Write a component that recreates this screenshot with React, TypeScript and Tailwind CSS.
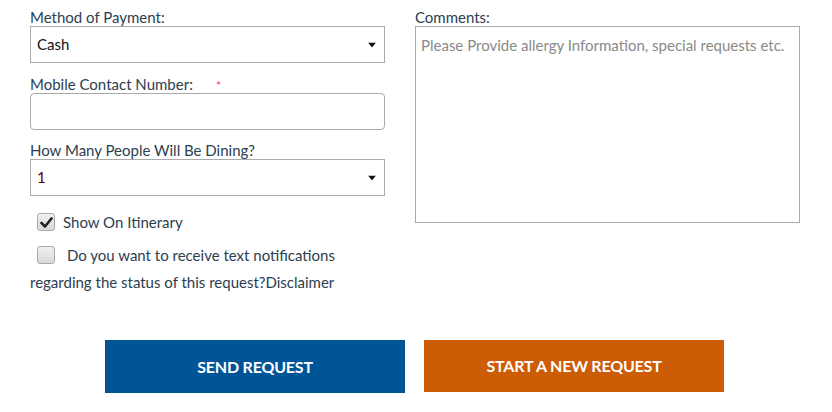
import React from "react";

const Caret = () => (
  <svg width="8" height="5" viewBox="0 0 8 5" className="absolute right-[8px] top-1/2 -translate-y-1/2">
    <path d="M0 0h8L4 5z" fill="#111" />
  </svg>
);

function Checkbox({ checked }: { checked?: boolean }) {
  return (
    <span className="w-[18px] h-[18px] rounded-[3px] border border-[#a9a9a9] bg-gradient-to-b from-[#f0f0f0] to-[#d9d9d9] flex items-center justify-center shrink-0">
      {checked && (
        <svg width="13" height="11" viewBox="0 0 13 11">
          <path d="M1.5 6l3.5 3.5L11.5 1.5" stroke="#222" strokeWidth="2.6" fill="none" strokeLinecap="round" strokeLinejoin="round" />
        </svg>
      )}
    </span>
  );
}

export default function App() {
  return (
    <div className="w-[832px] h-[412px] bg-white font-['Lato',sans-serif] text-[15px] text-[#2c3e50] overflow-hidden">
      <div className="flex gap-[30px] pl-[30px] pt-[8px]">
        {/* Left column */}
        <div className="w-[355px] flex flex-col">
          <label className="leading-[18px] h-[18px]">Method of Payment:</label>
          <div className="relative h-[37px] border border-[#aaa] flex items-center pl-[6px] text-[15px] text-[#111]">
            Cash
            <Caret />
          </div>

          <label className="mt-[12px] leading-[18px] h-[18px] flex">
            Mobile Contact Number:
            <span className="text-[#e0474c] text-[12px] leading-[12px] ml-[23px] mt-[5px]">*</span>
          </label>
          <div className="h-[37px] border border-[#aaa] rounded-[4px]" />

          <label className="mt-[11px] leading-[18px] h-[18px]">How Many People Will Be Dining?</label>
          <div className="relative h-[37px] border border-[#aaa] flex items-center pl-[6px] text-[15px] text-[#5a0000]">
            1
            <Caret />
          </div>

          <div className="mt-[17px] ml-[7px] flex items-center gap-[8px] h-[18px]">
            <Checkbox checked />
            <span>Show On Itinerary</span>
          </div>
          <div className="mt-[15px] ml-[7px] flex items-center gap-[12px] h-[18px]">
            <Checkbox />
            <span>Do you want to receive text notifications</span>
          </div>
          <div className="mt-[9px] leading-[18px]">regarding the status of this request?Disclaimer</div>
        </div>

        {/* Right column */}
        <div className="w-[385px] flex flex-col">
          <label className="leading-[18px] h-[18px]">Comments:</label>
          <div className="h-[197px] border border-[#aaa] px-[5px] pt-[9px] text-[#8a8a8a] leading-[18px]">
            Please Provide allergy Information, special requests etc.
          </div>
        </div>
      </div>

      <div className="flex gap-[19px] pl-[105px] mt-[49px] items-start">
        <button className="w-[300px] h-[53px] bg-[#005596] text-white font-bold text-[16px] tracking-[-0.2px]">
          SEND REQUEST
        </button>
        <button className="w-[300px] h-[52px] bg-[#cd5c06] text-white font-bold text-[16px] tracking-[-0.2px]">
          START A NEW REQUEST
        </button>
      </div>
    </div>
  );
}
